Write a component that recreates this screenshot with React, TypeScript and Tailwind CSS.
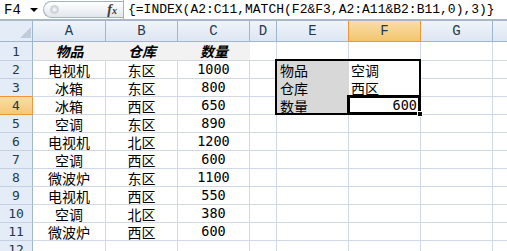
import React from 'react';

const data: string[][] = [
  ['物品', '仓库', '数量'],
  ['电视机', '东区', '1000'],
  ['冰箱', '东区', '800'],
  ['冰箱', '西区', '650'],
  ['空调', '东区', '890'],
  ['电视机', '北区', '1200'],
  ['空调', '西区', '600'],
  ['微波炉', '东区', '1100'],
  ['电视机', '西区', '550'],
  ['空调', '北区', '380'],
  ['微波炉', '西区', '600'],
  ['', '', ''],
];

const side: Record<number, [string, string]> = {
  2: ['物品', '空调'],
  3: ['仓库', '西区'],
  4: ['数量', '600'],
};

function FormulaBar() {
  return (
    <div className="flex h-[21px] border-b-2 border-[#a9b7c9] bg-white">
      <div className="relative w-[43px] shrink-0 flex items-center pl-[4px] font-['Liberation_Mono',monospace] text-[14px] leading-none text-black">
        F4
        <span className="absolute left-[30px] top-[8px] w-0 h-0 border-l-[4px] border-r-[4px] border-t-[4px] border-l-transparent border-r-transparent border-t-black" />
      </div>
      <div className="w-[80px] shrink-0 mt-[1px] h-[17px] rounded-l-full border border-r-0 border-[#a3b1c2] bg-linear-to-b from-white to-[#e2e7ed] flex items-center">
        <span className="ml-[6px] w-[9px] h-[9px] rounded-full bg-radial from-white to-[#b4bec9] border border-[#c8cfd7]" />
        <span className="ml-auto mr-[6px] font-['Liberation_Serif',serif] italic font-bold text-[14px] leading-none text-[#3a3a3a]">
          f<span className="text-[10px]">x</span>
        </span>
      </div>
      <div className="flex-1 border-l border-[#a3b1c2] pl-[4px] flex items-center font-['Liberation_Mono',monospace] text-[13px] leading-none text-black whitespace-nowrap overflow-hidden">
        {'{=INDEX(A2:C11,MATCH(F2&F3,A2:A11&B2:B11,0),3)}'}
      </div>
    </div>
  );
}

function ColHeader({ label, sel, beforeSel }: { label: string; sel?: boolean; beforeSel?: boolean }) {
  if (sel) {
    return (
      <div className="flex items-center justify-center bg-linear-to-b from-[#f9dea8] to-[#f3c56d] border-r border-b border-[#f29536] font-['Liberation_Mono',monospace] text-[14px] leading-none text-[#27394e]">
        {label}
      </div>
    );
  }
  return (
    <div
      className={
        beforeSel
          ? "flex items-center justify-center bg-linear-to-b from-[#f0f4fa] to-[#dde6f2] border-b border-b-[#9eb6ce] border-r border-r-[#f29536] font-['Liberation_Mono',monospace] text-[14px] leading-none text-[#27394e]"
          : "flex items-center justify-center bg-linear-to-b from-[#f0f4fa] to-[#dde6f2] border-b border-r border-[#9eb6ce] font-['Liberation_Mono',monospace] text-[14px] leading-none text-[#27394e]"
      }
    >
      {label}
    </div>
  );
}

function RowHeader({ n }: { n: number }) {
  let cls =
    "flex items-center justify-center bg-[#e4ecf7] border-r border-r-[#9eb6ce] border-b border-b-[#c3d1e3] font-['DejaVu_Sans_Mono',monospace] text-[13px] leading-none text-[#27394e]";
  if (n === 4)
    cls =
      "flex items-center justify-center bg-linear-to-b from-[#fbdca2] to-[#f6c877] border-r border-b border-[#f29536] font-['DejaVu_Sans_Mono',monospace] text-[13px] leading-none text-[#27394e]";
  if (n === 3)
    cls =
      "flex items-center justify-center bg-[#e4ecf7] border-r border-r-[#9eb6ce] border-b border-b-[#f29536] font-['DejaVu_Sans_Mono',monospace] text-[13px] leading-none text-[#27394e]";
  return <div className={cls}>{n}</div>;
}

function Row({ r }: { r: number }) {
  const [a, b, c] = data[r - 1];
  const cells: React.ReactNode[] = [];
  cells.push(<RowHeader key="h" n={r} />);
  if (r === 1) {
    cells.push(
      <div key="a" className="flex items-center justify-center bg-[#f2f2f2] border-b border-[#d0d7e5] font-['Noto_Sans_CJK_SC',sans-serif] font-bold italic text-[14px] leading-none text-black">
        {a}
      </div>,
      <div key="b" className="flex items-center justify-center bg-[#f2f2f2] border-b border-[#d0d7e5] font-['Noto_Sans_CJK_SC',sans-serif] font-bold italic text-[14px] leading-none text-black">
        {b}
      </div>,
      <div key="c" className="flex items-center justify-center bg-[#f2f2f2] border-b border-[#d0d7e5] font-['Noto_Sans_CJK_SC',sans-serif] font-bold italic text-[14px] leading-none text-black">
        {c}
      </div>
    );
  } else {
    cells.push(
      <div key="a" className="flex items-center justify-center border-r border-b border-[#d0d7e5] font-['Noto_Sans_CJK_SC',sans-serif] text-[14px] leading-none text-black">
        {a}
      </div>,
      <div key="b" className="flex items-center justify-center border-r border-b border-[#d0d7e5] font-['Noto_Sans_CJK_SC',sans-serif] text-[14px] leading-none text-black">
        {b}
      </div>,
      <div key="c" className="flex items-center justify-center border-r border-b border-[#d0d7e5] font-['DejaVu_Sans_Mono',monospace] text-[13.5px] leading-none text-black">
        {c}
      </div>
    );
  }
  cells.push(<div key="d" className="border-r border-b border-[#d0d7e5]" />);
  const s = side[r];
  if (s) {
    cells.push(
      <div key="e" className="relative flex items-center pl-[3px] bg-[#d8d8d8] font-['Noto_Sans_CJK_SC',sans-serif] text-[14px] leading-none text-black">
        {s[0]}
        {r === 2 && (
          <div className="absolute z-10 -left-[2px] -top-[2px] w-[146px] h-[56px] border-2 border-black pointer-events-none" />
        )}
      </div>
    );
    if (r === 4) {
      cells.push(
        <div key="f" className="relative flex items-center justify-end pr-[4px] bg-white font-['DejaVu_Sans_Mono',monospace] text-[13.5px] leading-none text-black">
          {s[1]}
          <div className="absolute z-20 -left-[2px] -top-[2px] right-0 bottom-0 border-[3px] border-black pointer-events-none" />
          <div className="absolute z-30 -right-[2px] -bottom-[2px] w-[6px] h-[6px] bg-black border border-white" />
        </div>
      );
    } else {
      cells.push(
        <div key="f" className="flex items-center pl-[2px] bg-white font-['Noto_Sans_CJK_SC',sans-serif] text-[14px] leading-none text-black">
          {s[1]}
        </div>
      );
    }
  } else {
    cells.push(
      <div key="e" className="border-r border-b border-[#d0d7e5]" />,
      <div key="f" className="border-r border-b border-[#d0d7e5]" />
    );
  }
  cells.push(
    <div key="g" className="border-r border-b border-[#d0d7e5]" />,
    <div key="hh" className="border-r border-b border-[#d0d7e5]" />
  );
  return <>{cells}</>;
}

export default function App() {
  return (
    <div className="w-[507px] h-[251px] overflow-hidden bg-white">
      <FormulaBar />
      <div className="w-[565px] grid grid-cols-[33px_73px_72px_72px_27px_72px_72px_72px_72px] grid-rows-[21px_19px_repeat(11,18px)]">
        <div className="relative bg-[#e4ecf7] border-r border-b border-[#9eb6ce]">
          <div className="absolute right-[1px] bottom-[3px] w-0 h-0 border-l-[11px] border-l-transparent border-b-[11px] border-b-[#c0ccdb]" />
        </div>
        <ColHeader label="A" />
        <ColHeader label="B" />
        <ColHeader label="C" />
        <ColHeader label="D" />
        <ColHeader label="E" beforeSel />
        <ColHeader label="F" sel />
        <ColHeader label="G" />
        <ColHeader label="H" />
        {data.map((_, i) => (
          <Row key={i} r={i + 1} />
        ))}
      </div>
    </div>
  );
}
